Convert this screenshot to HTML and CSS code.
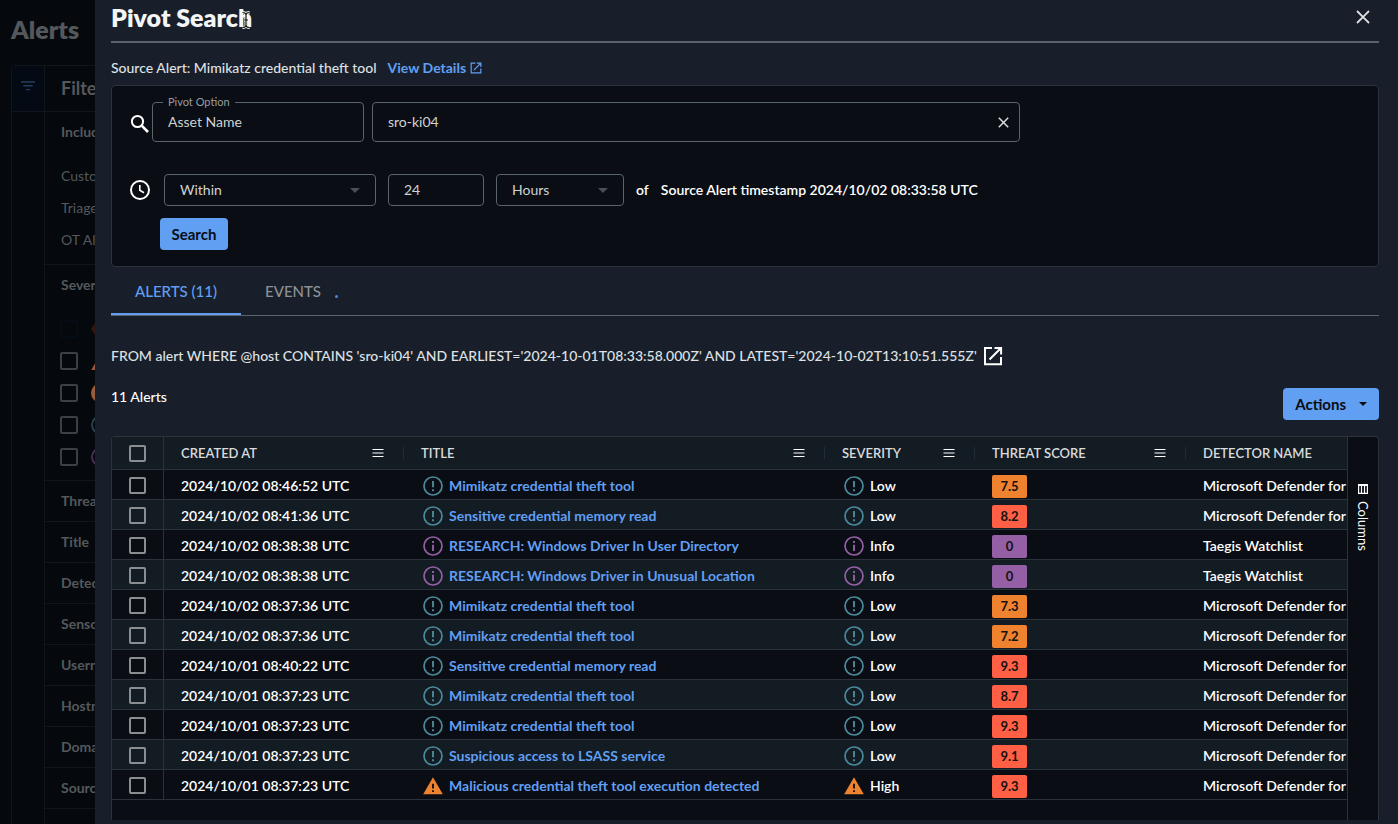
FILE: index.html
```html
<!DOCTYPE html>
<html lang="en">
<head>
<meta charset="utf-8">
<title>Pivot Search</title>
<link rel="stylesheet" href="styles.css">
</head>
<body>
<svg class="sprite" aria-hidden="true">
  <symbol id="low" viewBox="0 0 20 20"><circle cx="10" cy="10" r="9" fill="none" stroke="currentColor" stroke-width="1.7"/><path d="M10 5v6.2M10 13.2v2" stroke="currentColor" stroke-width="1.9"/></symbol>
  <symbol id="info" viewBox="0 0 20 20"><circle cx="10" cy="10" r="9" fill="none" stroke="currentColor" stroke-width="1.7"/><path d="M10 15V8.8M10 6.9V4.9" stroke="currentColor" stroke-width="1.9"/></symbol>
  <symbol id="high" viewBox="0 0 22 20"><path d="M11 0.5L21.8 19H0.2z" fill="currentColor"/><path d="M11 7.5v5.2M11 14.6v2" stroke="#0a0d14" stroke-width="2"/></symbol>
  <symbol id="menu" viewBox="0 0 12 10"><path d="M0.5 1.5h11M0.5 5h11M0.5 8.5h11" stroke="currentColor" stroke-width="1.2"/></symbol>
  <symbol id="open" viewBox="0 0 20 20"><path d="M9 2H2v16.2h16V11M11.5 1.9h6.6v6.6M18 2L6.5 13.5" fill="none" stroke="currentColor" stroke-width="2"/></symbol>
  <symbol id="close" viewBox="0 0 14 14"><path d="M1 1l12 12M13 1L1 13" stroke="currentColor" stroke-width="1.8"/></symbol>
</svg>

<div class="page">
  <h1 class="page-title">Alerts</h1>
  <div class="filters">
    <div class="rail">
      <button class="rail-button" aria-label="Toggle filters"><svg width="14" height="10" viewBox="0 0 14 10"><path d="M0 1h14M2.3 4.8h9.4M5 8.6h4" stroke="currentColor" stroke-width="1.4"/></svg></button>
    </div>
    <div class="filter-list">
      <h2 class="filter-head">Filters</h2>
      <section class="filter-group include">
        <h3>Include</h3>
        <p>Custom</p><p>Triaged</p><p>OT Alerts</p>
      </section>
      <section class="filter-group severity">
        <h3>Severity</h3>
        <label class="faded"><input type="checkbox" class="box" disabled aria-label="Critical"><svg class="c-critical" width="20" height="20" viewBox="0 0 20 20"><path d="M6 1h8l6 9-6 9H6l-6-9z" fill="currentColor"/></svg></label>
        <label><input type="checkbox" class="box" aria-label="High"><svg class="c-high" width="22" height="20"><use href="#high"/></svg></label>
        <label><input type="checkbox" class="box" aria-label="Medium"><svg class="c-medium" width="20" height="20" viewBox="0 0 20 20"><circle cx="10" cy="10" r="10" fill="currentColor"/></svg></label>
        <label><input type="checkbox" class="box" aria-label="Low"><svg class="c-low" width="20" height="20"><use href="#low"/></svg></label>
        <label><input type="checkbox" class="box" aria-label="Info"><svg class="c-info" width="20" height="20"><use href="#info"/></svg></label>
      </section>
      <h3 class="filter-row">Threat Score</h3>
      <h3 class="filter-row">Title</h3>
      <h3 class="filter-row">Detector</h3>
      <h3 class="filter-row">Sensor</h3>
      <h3 class="filter-row">Username</h3>
      <h3 class="filter-row">Hostname</h3>
      <h3 class="filter-row">Domain</h3>
      <h3 class="filter-row">Source</h3>
    </div>
  </div>
</div>

<main class="drawer">
  <header class="drawer-head">
    <h2>Pivot Search</h2>
    <button class="icon-button" aria-label="Close"><svg width="14" height="14"><use href="#close"/></svg></button>
    <svg class="caret" width="10" height="18" viewBox="0 0 10 18"><path d="M1.5 1.5Q4.5 1.5 5 3.5Q5.5 1.5 8.5 1.5M5 3.5v11M1.5 16.5Q4.5 16.5 5 14.5Q5.5 16.5 8.5 16.5M3 9h4" fill="none" stroke="#fff" stroke-width="3"/><path d="M1.5 1.5Q4.5 1.5 5 3.5Q5.5 1.5 8.5 1.5M5 3.5v11M1.5 16.5Q4.5 16.5 5 14.5Q5.5 16.5 8.5 16.5M3 9h4" fill="none" stroke="#111" stroke-width="1.2"/></svg>
  </header>

  <div class="source">
    <span>Source Alert: Mimikatz credential theft tool</span>
    <a href="#">View Details <svg width="12" height="12"><use href="#open"/></svg></a>
  </div>

  <form class="search-panel">
    <div class="search-row">
      <svg class="lens" width="20" height="20" viewBox="0 0 20 20"><circle cx="7.5" cy="7.5" r="5.6" fill="none" stroke="currentColor" stroke-width="2"/><path d="M11.7 11.7l6.3 6.3" stroke="currentColor" stroke-width="2.6"/></svg>
      <div class="field option">
        <label for="option">Pivot Option</label>
        <input id="option" type="text" value="Asset Name">
      </div>
      <div class="field term">
        <input type="text" value="sro-ki04" aria-label="Search term">
        <button type="button" class="icon-button" aria-label="Clear"><svg width="11" height="11"><use href="#close"/></svg></button>
      </div>
    </div>
    <div class="time-row">
      <svg class="clock" width="20" height="20" viewBox="0 0 20 20"><circle cx="10" cy="10" r="9" fill="none" stroke="currentColor" stroke-width="2"/><path d="M9.8 5v5.3l4.2 2.5" fill="none" stroke="currentColor" stroke-width="1.6"/></svg>
      <div class="field pick wide"><select aria-label="Range"><option>Within</option></select><i class="arrow"></i></div>
      <div class="field amount"><input type="text" value="24" aria-label="Amount"></div>
      <div class="field pick"><select aria-label="Unit"><option>Hours</option></select><i class="arrow"></i></div>
      <strong>of</strong>
      <strong>Source Alert timestamp 2024/10/02 08:33:58 UTC</strong>
    </div>
    <button type="button" class="primary search">Search</button>
  </form>

  <nav class="tabs">
    <button class="tab active">ALERTS (11)</button>
    <button class="tab">EVENTS<i class="loading"></i></button>
  </nav>

  <div class="query">
    <span>FROM alert WHERE @host CONTAINS 'sro-ki04' AND EARLIEST='2024-10-01T08:33:58.000Z' AND LATEST='2024-10-02T13:10:51.555Z'</span>
    <a href="#" aria-label="Open query"><svg width="20" height="20"><use href="#open"/></svg></a>
  </div>

  <div class="toolbar">
    <span class="count">11 Alerts</span>
    <button class="primary actions">Actions <i class="arrow"></i></button>
  </div>

  <div class="grid">
    <div class="grid-body">
      <table>
        <colgroup><col class="w-check"><col class="w-created"><col class="w-title"><col class="w-sev"><col class="w-score"><col></colgroup>
        <thead><tr>
          <th><input type="checkbox" class="box" aria-label="Select all"></th>
          <th><div class="th">CREATED AT<svg width="12" height="10"><use href="#menu"/></svg></div></th>
          <th><div class="th">TITLE<svg width="12" height="10"><use href="#menu"/></svg></div></th>
          <th><div class="th">SEVERITY<svg width="12" height="10"><use href="#menu"/></svg></div></th>
          <th><div class="th">THREAT SCORE<svg width="12" height="10"><use href="#menu"/></svg></div></th>
          <th>DETECTOR NAME</th>
        </tr></thead>
        <tbody id="rows"></tbody>
      </table>
    </div>
    <button class="columns"><svg width="10" height="10" viewBox="0 0 10 10"><path d="M.6 .6h8.8v8.8H.6zM3.5 .6v8.8M6.5 .6v8.8" fill="none" stroke="currentColor" stroke-width="1.2"/><path d="M0 1h10" stroke="currentColor" stroke-width="2"/></svg>Columns</button>
  </div>
</main>
<script src="app.js"></script>
</body>
</html>
```

FILE: styles.css
```css
* { box-sizing: border-box; }

body {
  margin: 0;
  height: 100vh;
  overflow: hidden;
  background: #05080c;
  color: #fff;
  font: 500 14px/20px Lato, sans-serif;
}

h1, h2, h3, p { margin: 0; }
button, input, select { font: inherit; color: inherit; }
button { border: 0; background: none; padding: 0; }
svg { flex: none; display: block; }
.sprite { position: absolute; width: 0; height: 0; }

.box {
  appearance: none;
  display: block;
  flex: none;
  width: 17px;
  height: 17px;
  margin: 0;
  border: 2px solid #8b8e91;
  border-radius: 2px;
}

.c-low { color: #4b8a9c; }
.c-info { color: #945fa5; }
.c-high { color: #ee822f; }

/* Dimmed page behind the drawer */
.page { padding: 14px 0 0 11px; color: #54585c; }
.page-title { font-size: 25px; line-height: 30px; font-weight: 800; margin-bottom: 21px; }
.filters {
  display: flex;
  height: 800px;
  border: 1px solid #10161b;
  border-radius: 4px 0 0 0;
}
.rail { width: 33px; border-right: 1px solid #10161b; }
.rail-button {
  display: flex;
  justify-content: center;
  align-items: center;
  width: 100%;
  height: 46px;
  padding-bottom: 5px;
  background: #030a14;
  border-bottom: 1px solid #10161b;
  color: #243e60;
}
.filter-list { flex: 1; }
.filter-list h3 { font-size: 14px; font-weight: 700; }
.filter-head, .filter-group, .filter-row { padding-left: 16px; border-bottom: 1px solid #10161b; }
.filter-head { height: 46px; font-size: 18px; line-height: 44px; font-weight: 700; }
.filter-group h3 { line-height: 40px; }
.include { height: 153px; }
.include h3 { margin-bottom: 8px; }
.include p { font-weight: 400; line-height: 32px; }
.severity { height: 216px; padding-left: 15px; }
.severity h3 { margin-bottom: 8px; padding-left: 1px; }
.severity label { display: flex; align-items: center; gap: 13px; height: 32px; }
.severity .box { width: 18px; height: 18px; border-color: #3c4044; }
.severity svg { opacity: .5; }
.severity .c-medium { color: #d98250; opacity: .7; }
.severity .c-high { color: #d97550; opacity: .7; }
.severity .c-critical { color: #5c2418; }
.severity .faded .box { border-color: #060c16; }
.filter-row { height: 41px; line-height: 40px; }

/* Drawer */
.drawer {
  position: fixed;
  inset: 0 0 0 95px;
  display: flex;
  flex-direction: column;
  padding: 0 19px 4px 16px;
  background: #181f2a;
}
.drawer-head {
  position: relative;
  display: flex;
  justify-content: space-between;
  align-items: center;
  flex: none;
  height: 43px;
  padding: 0 9px 8px 0;
  border-bottom: 2px solid #5b646c;
}
.drawer-head h2 { font-size: 25px; line-height: 32px; font-weight: 800; color: #f4f5f6; }
.caret { position: absolute; left: 130px; top: 11px; }
.icon-button { color: #dfe1e3; }

.source { display: flex; gap: 11px; margin: 15px 0 7px; color: #dfe1e3; }
a { color: #619ff3; text-decoration: none; font-weight: 700; }
.source a { display: flex; align-items: center; gap: 4px; }

.search-panel {
  flex: none;
  padding: 16px;
  border: 1px solid #2a323d;
  border-radius: 4px;
  background: #0a0d14;
}
.search-row, .time-row { display: flex; align-items: center; }
.search-row { gap: 8px; margin-bottom: 32px; }
.lens { margin: 4px -6px 0 2px; }
.time-row { gap: 12px; margin-bottom: 12px; }
.time-row strong { font-weight: 600; }
.clock { margin: 0 2px; }

.field {
  position: relative;
  display: flex;
  align-items: center;
  height: 32px;
  border: 1px solid #5a646b;
  border-radius: 4px;
  color: #cfd2d4;
  font-weight: 400;
}
.field input, .field select {
  flex: 1;
  min-width: 0;
  height: 100%;
  padding: 0 15px;
  border: 0;
  outline: 0;
  background: none;
  appearance: none;
}
.field input { padding-bottom: 2px; }
.field label {
  position: absolute;
  top: -9px;
  left: 10px;
  padding: 0 5px;
  background: #0a0d14;
  color: #989ca0;
  font-size: 11px;
  line-height: 16px;
}
.option, .term { height: 40px; }
.option, .wide { width: 212px; }
.term { flex: 0 1 648px; padding-right: 10px; }
.amount { width: 96px; }
.pick { width: 128px; padding-right: 15px; }
.wide { width: 212px; }
.arrow {
  width: 0;
  border: 5px solid transparent;
  border-top-color: #484e54;
  border-bottom: 0;
}

.primary {
  height: 32px;
  border-radius: 4px;
  background: #619ff3;
  color: #0a0d14;
  font-size: 15px;
  font-weight: 700;
}
.search { display: block; width: 68px; margin-left: 32px; }

.tabs { display: flex; flex: none; height: 49px; border-bottom: 1px solid #5b646c; }
.tab {
  display: flex;
  align-items: center;
  gap: 14px;
  height: 48px;
  padding: 2px 24px 0;
  border-bottom: 2px solid transparent;
  color: #8d9196;
  font-size: 15px;
}
.tab.active { color: #619ff3; border-bottom-color: #619ff3; }
.loading { width: 3px; height: 3px; margin-top: 10px; border-radius: 50%; background: #4f86d6; }

.query { display: flex; align-items: center; gap: 6px; margin: 30px 0 22px; color: #dfe1e3; }
.query a { color: #fff; }
.toolbar { display: flex; justify-content: space-between; flex: none; margin-bottom: 16px; }
.count { line-height: 18px; }
.actions { display: flex; align-items: center; gap: 13px; padding: 0 12px; }
.actions .arrow { border-width: 4px 4px 0; border-top-color: #0a0d14; }

/* Result grid */
.grid {
  display: flex;
  flex: 1;
  min-height: 0;
  border: 1px solid #2a333c;
  border-bottom: 0;
  border-radius: 4px 4px 0 0;
  background: #0a0d14;
}
.grid-body { flex: 1; min-width: 0; overflow: hidden; }
table { width: 100%; table-layout: fixed; border-collapse: separate; border-spacing: 0; }
.w-check { width: 52px; }
.w-created { width: 240px; }
.w-title { width: 421px; }
.w-sev { width: 150px; }
.w-score { width: 211px; }
th, td {
  height: 30px;
  padding: 0 0 0 17px;
  border-bottom: 1px solid #2a333c;
  text-align: left;
  white-space: nowrap;
  overflow: hidden;
}
th { height: 33px; background: #131b23; color: #d9dbdd; font-size: 13px; font-weight: 600; }
td { padding-top: 2px; font-weight: 600; }
th:first-child, td:first-child { border-right: 1px solid #2a333c; }
tbody tr:nth-child(even) { background: #131b23; }
.th {
  display: flex;
  align-items: center;
  justify-content: space-between;
  height: 12px;
  padding-right: 19px;
  border-right: 1px solid #232d38;
}
.th svg { color: #fff; }
.cell { display: flex; align-items: center; gap: 6px; padding-left: 2px; height: 20px; }
.cell svg { overflow: visible; }
.chip {
  display: block;
  width: 35px;
  height: 23px;
  margin-top: 2px;
  border-radius: 2px;
  color: #15110f;
  font-size: 13px;
  font-weight: 700;
  line-height: 23px;
  text-align: center;
}
.medium { background: #ee822f; }
.critical { background: #ff5f45; }
.none { background: #945fa5; }

.columns {
  display: flex;
  align-items: center;
  gap: 7px;
  width: 31px;
  padding-top: 47px;
  border-left: 1px solid #2a333c;
  writing-mode: vertical-rl;
  font-size: 13px;
  font-weight: 400;
}
```

FILE: app.js
```js
const alerts = [
  ["2024/10/02 08:46:52 UTC", "Mimikatz credential theft tool", "Low", "7.5", "Microsoft Defender for"],
  ["2024/10/02 08:41:36 UTC", "Sensitive credential memory read", "Low", "8.2", "Microsoft Defender for"],
  ["2024/10/02 08:38:38 UTC", "RESEARCH: Windows Driver In User Directory", "Info", "0", "Taegis Watchlist"],
  ["2024/10/02 08:38:38 UTC", "RESEARCH: Windows Driver in Unusual Location", "Info", "0", "Taegis Watchlist"],
  ["2024/10/02 08:37:36 UTC", "Mimikatz credential theft tool", "Low", "7.3", "Microsoft Defender for"],
  ["2024/10/02 08:37:36 UTC", "Mimikatz credential theft tool", "Low", "7.2", "Microsoft Defender for"],
  ["2024/10/01 08:40:22 UTC", "Sensitive credential memory read", "Low", "9.3", "Microsoft Defender for"],
  ["2024/10/01 08:37:23 UTC", "Mimikatz credential theft tool", "Low", "8.7", "Microsoft Defender for"],
  ["2024/10/01 08:37:23 UTC", "Mimikatz credential theft tool", "Low", "9.3", "Microsoft Defender for"],
  ["2024/10/01 08:37:23 UTC", "Suspicious access to LSASS service", "Low", "9.1", "Microsoft Defender for"],
  ["2024/10/01 08:37:23 UTC", "Malicious credential theft tool execution detected", "High", "9.3", "Microsoft Defender for"]
];

const band = (score) => (score >= 8 ? "critical" : score > 0 ? "medium" : "none");

document.getElementById("rows").innerHTML = alerts.map(([created, title, severity, score, detector]) => {
  const key = severity.toLowerCase();
  const icon = `<svg class="c-${key}" width="20" height="20"><use href="#${key}"/></svg>`;
  return `<tr>
    <td><input type="checkbox" class="box" aria-label="Select ${title}"></td>
    <td>${created}</td>
    <td><div class="cell">${icon}<a href="#">${title}</a></div></td>
    <td><div class="cell">${icon}${severity}</div></td>
    <td><span class="chip ${band(Number(score))}">${score}</span></td>
    <td>${detector}</td>
  </tr>`;
}).join("");
```
